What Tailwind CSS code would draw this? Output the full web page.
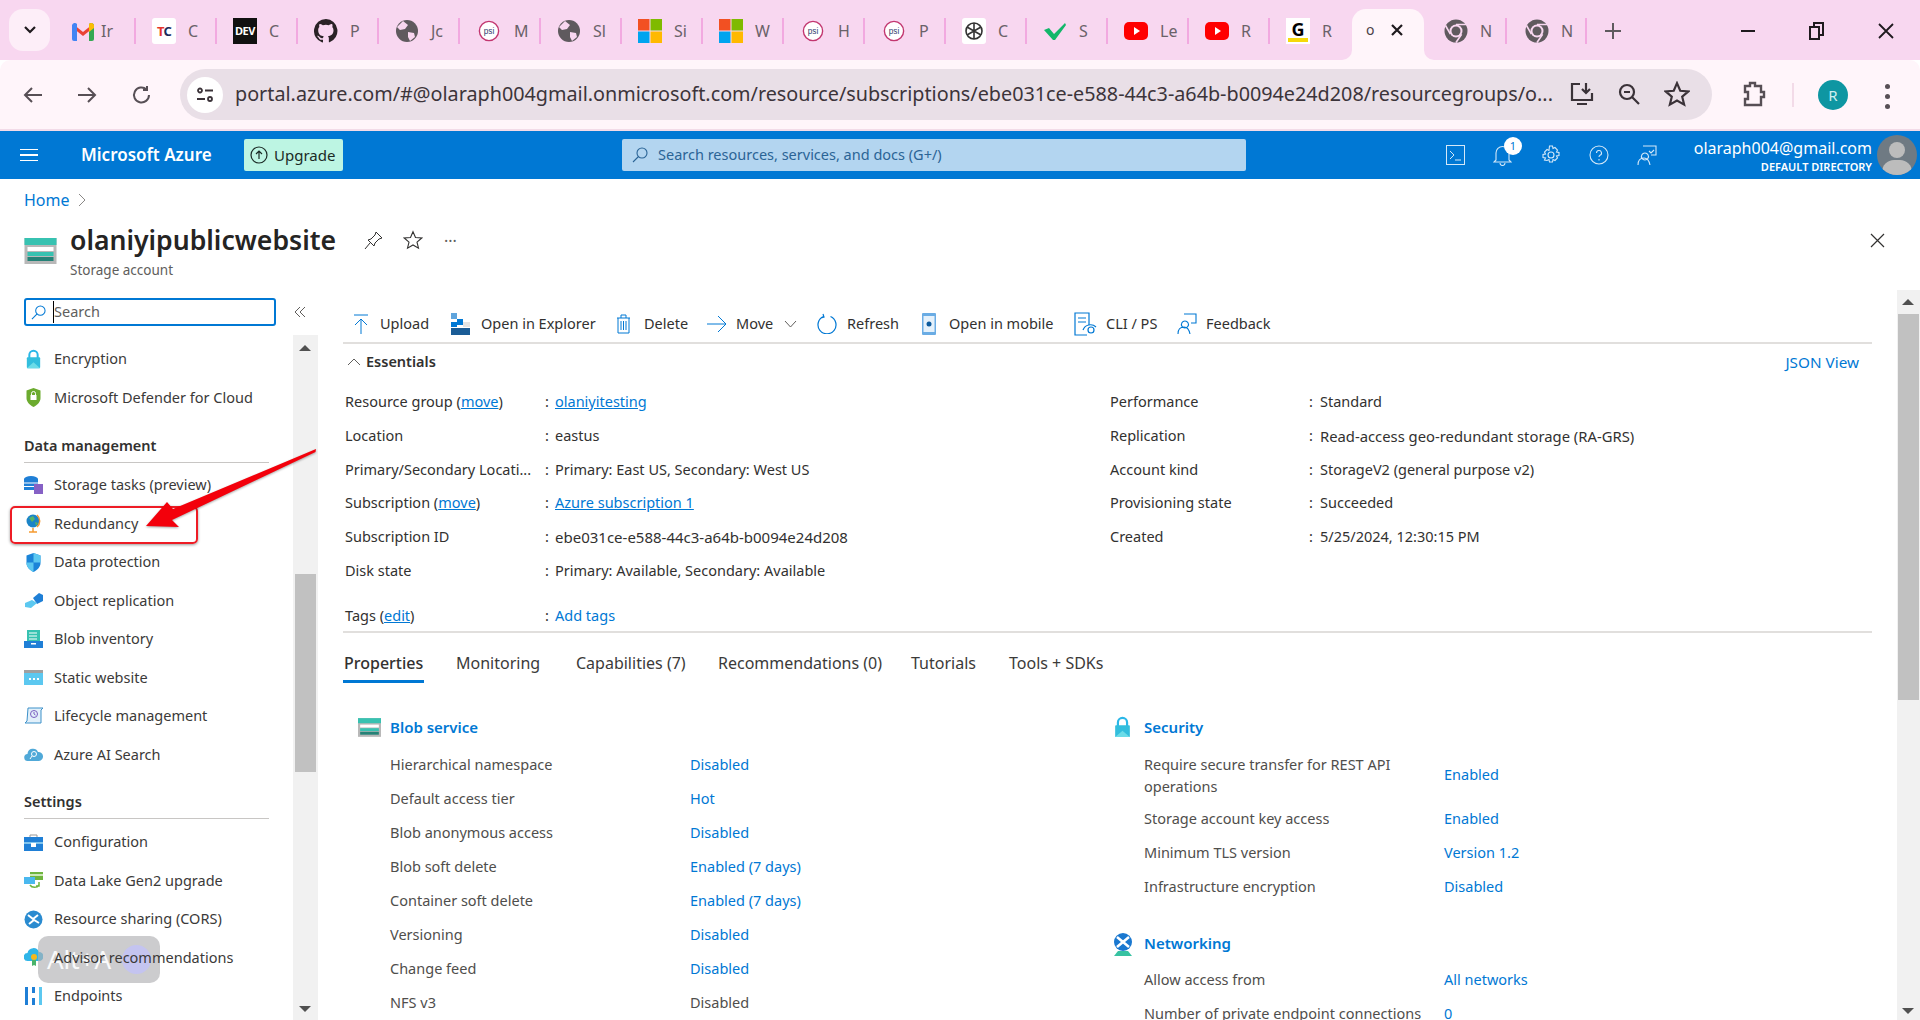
<!DOCTYPE html>
<html lang="en">
<head>
  <meta charset="UTF-8">
  <title>olaniyipublicwebsite - Microsoft Azure</title>
  <script src="https://cdn.jsdelivr.net/npm/@tailwindcss/browser@4"></script>
</head>
<body class="w-[1920px] h-[1020px] overflow-hidden bg-white relative font-['Noto_Sans',sans-serif] text-[#323130] text-[14.5px]">

  <svg class="hidden">
    <symbol id="storage" viewBox="0 0 32 26">
      <rect width="32" height="26" fill="#b8b8b8"/><rect width="32" height="7" fill="#37c2b1"/><rect x="3" y="9" width="26" height="4" fill="#fff"/><rect x="3" y="14" width="26" height="4" fill="#37c2b1"/><rect x="3" y="19" width="26" height="4" fill="#258277"/>
    </symbol>
    <symbol id="lock" viewBox="0 0 18 24">
      <path d="M4 11V7a5 5 0 0 1 10 0v4" fill="none" stroke="#2ab7e8" stroke-width="2.4"/><rect x="1" y="10" width="16" height="13" rx="1" fill="#32bedd"/><path d="M1 23l8-7 8 7z" fill="#6bdce8"/>
    </symbol>
    <symbol id="globe-net" viewBox="0 0 24 24">
      <circle cx="12" cy="10" r="9" fill="#1a78d0"/><path d="M6 5l6 5 6-5M6 15l6-5 6 5" stroke="#fff" stroke-width="2.5" fill="none"/><path d="M3 24l4-5h10l4 5z" fill="#37c2a1"/>
    </symbol>
    <symbol id="chrome" viewBox="0 0 24 24">
      <circle cx="12" cy="12" r="11.500" fill="#5f5a5e"/><circle cx="12" cy="12" r="6.500" fill="#f8d7f0"/><circle cx="12" cy="12" r="4.500" fill="#5f5a5e"/>
      <path d="M12 5.500h10.500M6.400 15.200L1.500 6.500M17.600 15.200L12 23.500" stroke="#f8d7f0" stroke-width="1.600"/>
    </symbol>
    <symbol id="world" viewBox="0 0 24 24">
      <circle cx="12" cy="12" r="11" fill="#5f5a5e"/><path d="M8 2l5 4-3 4-5 1-3-3zM13 13l6 1 1 4-5 4-2-4z" fill="#f8d7f0"/>
    </symbol>
    <symbol id="psi" viewBox="0 0 24 24">
      <circle cx="12" cy="12" r="10.5" fill="#fff" stroke="#c2366f" stroke-width="1.5"/><text x="12" y="15" text-anchor="middle" font-size="9" font-family="Liberation Sans" fill="#31406e">psi</text>
    </symbol>
    <symbol id="ms" viewBox="0 0 24 24">
      <rect width="11.5" height="11.5" fill="#f25022"/><rect x="12.5" width="11.5" height="11.5" fill="#7fba00"/><rect y="12.5" width="11.5" height="11.5" fill="#00a4ef"/><rect x="12.5" y="12.5" width="11.5" height="11.5" fill="#ffb900"/>
    </symbol>
    <symbol id="yt" viewBox="0 0 24 24">
      <rect y="3" width="24" height="18" rx="5" fill="#f00"/><path d="M10 8l6 4-6 4z" fill="#fff"/>
    </symbol>
  </svg>

  <!-- tab strip -->
  <div class="h-[60px] bg-[#f8d7f0] flex relative">
    <div class="ml-[9px] mt-[9px] w-[41px] h-[42px] rounded-[14px] bg-[#fdeef8] flex items-center justify-center">
      <svg width="14" height="10" viewBox="0 0 14 10" fill="none" stroke="#1f1a1e" stroke-width="2.2"><path d="M2 2l5 5 5-5"/></svg>
    </div>
    <div class="ml-[5px] mt-[18px] h-[26px] flex text-[#6a6268] text-[16px] leading-[26px]">
      <div class="w-[81px] h-[26px] border-r-2 border-[#f2a9e0] flex items-center pl-[16px] gap-[6px] overflow-hidden">
        <svg class="shrink-0" width="24" height="24" viewBox="0 0 24 24"><path d="M2 5l10 8 10-8v4l-10 8L2 9z" fill="#ea4335"/><path d="M1 6a3 3 0 0 1 5 -1v17H3a2 2 0 0 1-2-2z" fill="#4285f4"/><path d="M18 22V5a3 3 0 0 1 5 1v14a2 2 0 0 1-2 2z" fill="#34a853"/><path d="M18 5a3 3 0 0 1 5 1v3l-5 4z" fill="#fbbc04"/></svg><span>Ir</span>
      </div>
      <div class="w-[81px] h-[26px] border-r-2 border-[#f2a9e0] flex items-center pl-[16px] gap-[12px] overflow-hidden">
        <div class="shrink-0 w-[24px] h-[26px] bg-white rounded-[3px] flex items-center justify-center text-[13px] font-bold tracking-[-1px]"><span class="text-[#e5352b]">T</span><span class="text-[#1b2a5c]">C</span></div><span>C</span>
      </div>
      <div class="w-[81px] h-[26px] border-r-2 border-[#f2a9e0] flex items-center pl-[16px] gap-[12px] overflow-hidden">
        <div class="shrink-0 w-[24px] h-[26px] bg-[#111] text-white flex items-center justify-center text-[11px] font-bold tracking-[-0.5px]">DEV</div><span>C</span>
      </div>
      <div class="w-[81px] h-[26px] border-r-2 border-[#f2a9e0] flex items-center pl-[16px] gap-[12px] overflow-hidden">
        <svg class="shrink-0" width="24" height="24" viewBox="0 0 16 16" fill="#2a2226"><path d="M8 0a8 8 0 0 0-2.5 15.6c.4.1.5-.2.5-.4v-1.4c-2.2.5-2.7-1-2.7-1-.4-.9-.9-1.200-.9-1.200-.7-.5.1-.5.1-.5.8.1 1.200.8 1.200.8.7 1.200 1.900.9 2.300.7.1-.5.3-.9.5-1.100-1.800-.2-3.700-.9-3.700-4 0-.9.300-1.600.8-2.100-.1-.2-.4-1 .1-2.100 0 0 .7-.2 2.200.8a7.600 7.600 0 0 1 4 0c1.500-1 2.200-.8 2.200-.8.4 1.100.2 1.900.1 2.100.5.600.8 1.300.8 2.100 0 3.100-1.900 3.700-3.700 3.900.3.300.6.800.6 1.500v2.200c0 .2.100.5.500.4A8 8 0 0 0 8 0z"/></svg><span>P</span>
      </div>
      <div class="w-[81px] h-[26px] border-r-2 border-[#f2a9e0] flex items-center pl-[16px] gap-[12px] overflow-hidden">
        <svg class="shrink-0" width="24" height="24"><use href="#world"/></svg><span>Jc</span>
      </div>
      <div class="w-[81px] h-[26px] border-r-2 border-[#f2a9e0] flex items-center pl-[18px] gap-[14px] overflow-hidden">
        <svg class="shrink-0" width="22" height="22"><use href="#psi"/></svg><span>M</span>
      </div>
      <div class="w-[81px] h-[26px] border-r-2 border-[#f2a9e0] flex items-center pl-[16px] gap-[12px] overflow-hidden">
        <svg class="shrink-0" width="24" height="24"><use href="#world"/></svg><span>Sl</span>
      </div>
      <div class="w-[81px] h-[26px] border-r-2 border-[#f2a9e0] flex items-center pl-[16px] gap-[12px] overflow-hidden">
        <svg class="shrink-0" width="24" height="24"><use href="#ms"/></svg><span>Si</span>
      </div>
      <div class="w-[81px] h-[26px] border-r-2 border-[#f2a9e0] flex items-center pl-[16px] gap-[12px] overflow-hidden">
        <svg class="shrink-0" width="24" height="24"><use href="#ms"/></svg><span>W</span>
      </div>
      <div class="w-[81px] h-[26px] border-r-2 border-[#f2a9e0] flex items-center pl-[18px] gap-[14px] overflow-hidden">
        <svg class="shrink-0" width="22" height="22"><use href="#psi"/></svg><span>H</span>
      </div>
      <div class="w-[81px] h-[26px] border-r-2 border-[#f2a9e0] flex items-center pl-[18px] gap-[14px] overflow-hidden">
        <svg class="shrink-0" width="22" height="22"><use href="#psi"/></svg><span>P</span>
      </div>
      <div class="w-[81px] h-[26px] border-r-2 border-[#f2a9e0] flex items-center pl-[16px] gap-[12px] overflow-hidden">
        <div class="shrink-0 w-[24px] h-[26px] bg-white rounded-[3px] flex items-center justify-center"><svg width="20" height="20" viewBox="0 0 20 20" fill="none" stroke="#333" stroke-width="1.6"><circle cx="10" cy="10" r="8"/><path d="M10 2v16M3 6l14 8M17 6L3 14"/></svg></div><span>C</span>
      </div>
      <div class="w-[81px] h-[26px] border-r-2 border-[#f2a9e0] flex items-center pl-[16px] gap-[12px] overflow-hidden">
        <svg class="shrink-0" width="24" height="24" viewBox="0 0 24 24"><path d="M1 11l5-2 5 6L22 4l1 2-11 15h-2z" fill="#12b76a"/></svg><span>S</span>
      </div>
      <div class="w-[81px] h-[26px] border-r-2 border-[#f2a9e0] flex items-center pl-[16px] gap-[12px] overflow-hidden">
        <svg class="shrink-0" width="24" height="24"><use href="#yt"/></svg><span>Le</span>
      </div>
      <div class="w-[81px] h-[26px] border-r-2 border-[#f2a9e0] flex items-center pl-[16px] gap-[12px] overflow-hidden">
        <svg class="shrink-0" width="24" height="24"><use href="#yt"/></svg><span>R</span>
      </div>
      <div class="w-[80px] h-[26px] flex items-center pl-[16px] gap-[12px] overflow-hidden">
        <div class="shrink-0 w-[24px] h-[26px] bg-white flex flex-col items-center justify-center leading-none"><span class="text-[18px] font-bold text-black">G</span><span class="block w-[20px] h-[4px] bg-[#f5d90a]"></span></div><span>R</span>
      </div>
      <div class="w-[136px]"></div>
    </div>
    <!-- active tab -->
    <svg class="absolute left-[1342px] top-[50px]" width="92" height="10" viewBox="0 0 92 10" fill="#fff5fa"><path d="M10 0v10H0a10 10 0 0 0 10-10zM82 0v10h10A10 10 0 0 1 82 0z"/></svg>
    <div class="absolute left-[1352px] top-[9px] w-[72px] h-[51px] bg-[#fff5fa] rounded-t-[14px] flex items-center pl-[14px] pb-[10px] gap-[16px]">
      <span class="text-[14px] text-[#4a4248]">o</span>
      <svg width="14" height="14" viewBox="0 0 14 14" stroke="#1f1a1e" stroke-width="2.2"><path d="M2 2l10 10M12 2L2 12"/></svg>
    </div>
    <div class="absolute left-[1444px] top-[18px] h-[26px] flex text-[#6a6268] text-[16px]">
      <div class="w-[63px] h-[26px] border-r-2 border-[#f2a9e0] flex items-center gap-[12px] overflow-hidden">
        <svg class="shrink-0" width="24" height="24"><use href="#chrome"/></svg><span>N</span>
      </div>
      <div class="w-[80px] h-[26px] border-r-2 border-[#f2a9e0] flex items-center pl-[18px] gap-[12px] overflow-hidden">
        <svg class="shrink-0" width="24" height="24"><use href="#chrome"/></svg><span>N</span>
      </div>
      <div class="ml-[18px] flex items-center">
        <svg width="16" height="16" viewBox="0 0 16 16" stroke="#5f5a5e" stroke-width="2"><path d="M8 0v16M0 8h16"/></svg>
      </div>
    </div>
    <div class="absolute left-[1741px] top-[22px] flex items-center">
      <div class="w-[14px] h-[2px] bg-[#1f1a1e]"></div>
      <svg class="ml-[54px]" width="16" height="18" viewBox="0 0 16 18" fill="none" stroke="#1f1a1e" stroke-width="2"><rect x="1" y="5" width="9" height="12"/><path d="M5 5V1h9v12h-4"/></svg>
      <svg class="ml-[53px]" width="16" height="16" viewBox="0 0 16 16" stroke="#1f1a1e" stroke-width="1.800"><path d="M1 1l14 14M15 1L1 15"/></svg>
    </div>
  </div>

  <!-- browser toolbar -->
  <div class="h-[71px] bg-[#fff5fa] border-b-2 border-[#f3dbe8] rounded-t-[10px] flex items-start pt-[9px] relative">
    <div class="w-[180px] h-[51px] flex items-center text-[#574f55]">
      <svg class="ml-[23px]" width="20" height="20" viewBox="0 0 20 20" fill="none" stroke="currentColor" stroke-width="2"><path d="M19 10H2M9 3l-7 7 7 7"/></svg>
      <svg class="ml-[34px]" width="20" height="20" viewBox="0 0 20 20" fill="none" stroke="currentColor" stroke-width="2"><path d="M1 10h17M11 3l7 7-7 7"/></svg>
      <svg class="ml-[35px]" width="20" height="20" viewBox="0 0 20 20" fill="none" stroke="currentColor" stroke-width="2"><path d="M17 10a7.500 7.500 0 1 1-2.500-5.600M15 1v4h-4"/></svg>
    </div>
    <div class="w-[1532px] h-[51px] rounded-full bg-[#e9dfe7] flex items-center pl-[7px] relative">
      <div class="w-[36px] h-[36px] rounded-full bg-white flex items-center justify-center shrink-0">
        <svg width="18" height="18" viewBox="0 0 18 18" fill="none" stroke="#3a3238" stroke-width="1.800"><circle cx="4" cy="4.500" r="2"/><path d="M9 4.500h8M1 13h8"/><circle cx="14" cy="13" r="2"/></svg>
      </div>
      <span class="ml-[12px] pb-[2px] text-[19.780px] text-[#3c343a] whitespace-nowrap">portal.azure.com/#@olaraph004gmail.onmicrosoft.com/resource/subscriptions/ebe031ce-e588-44c3-a64b-b0094e24d208/resourcegroups/o...</span>
      <svg class="absolute left-[1389px] top-[12px]" width="26" height="26" viewBox="0 0 26 26" fill="none" stroke="#3a3238" stroke-width="2.200"><path d="M11 3H3v16h20V12M17 2v10M13 8l4 4 4-4M8 23h10"/></svg>
      <svg class="absolute left-[1437px] top-[13px]" width="24" height="24" viewBox="0 0 24 24" fill="none" stroke="#3a3238" stroke-width="2.200"><circle cx="10" cy="10" r="7"/><path d="M15 15l7 7M7 10h6"/></svg>
      <svg class="absolute left-[1484px] top-[12px]" width="26" height="26" viewBox="0 0 24 24" fill="none" stroke="#3a3238" stroke-width="2"><path d="M12 2l3 7 7.500.6-5.700 4.900 1.800 7.300L12 18l-6.600 3.800 1.800-7.300L1.500 9.600 9 9z"/></svg>
    </div>
    <svg class="absolute left-[1741px] top-[21px]" width="25" height="26" viewBox="0 0 25 26" fill="none" stroke="#574f55" stroke-width="2.400"><path d="M4 5h5V2h5v3h6v6h3v5h-3v8H4v-6h3v-7H4z"/></svg>
    <div class="absolute left-[1792px] top-[23px] w-[2px] h-[24px] bg-[#f3dbe8]"></div>
    <div class="absolute left-[1818px] top-[20px] w-[30px] h-[30px] rounded-full bg-[#0e96a2] text-[#cdeef0] text-[15px] flex items-center justify-center">R</div>
    <div class="absolute left-[1885px] top-[24px] flex flex-col gap-[5px]">
      <div class="w-[5px] h-[5px] rounded-full bg-[#574f55]"></div>
      <div class="w-[5px] h-[5px] rounded-full bg-[#574f55]"></div>
      <div class="w-[5px] h-[5px] rounded-full bg-[#574f55]"></div>
    </div>
  </div>

  <!-- azure header -->
  <header class="h-[48px] bg-[#0078d4] text-white flex items-center relative">
    <div class="ml-[20px] w-[18px] flex flex-col gap-[4px]">
      <div class="h-[1.5px] bg-white"></div><div class="h-[1.5px] bg-white"></div><div class="h-[1.5px] bg-white"></div>
    </div>
    <span class="ml-[43px] w-[131px] text-[17px] font-semibold whitespace-nowrap">Microsoft Azure</span>
    <div class="ml-[32px] w-[99px] h-[32px] bg-[#bdf5e3] text-[#1b2b26] flex items-center pl-[6px] gap-[6px] rounded-[2px]">
      <svg width="18" height="18" viewBox="0 0 18 18" fill="none" stroke="#1b2b26" stroke-width="1.200"><circle cx="9" cy="9" r="8"/><path d="M9 13V5M6 8l3-3 3 3"/></svg>
      <span class="text-[15px]">Upgrade</span>
    </div>
    <div class="ml-[279px] w-[624px] h-[32px] bg-[#b3d5f0] text-[#2b6496] flex items-center pl-[10px] gap-[10px] rounded-[2px]">
      <svg width="16" height="16" viewBox="0 0 16 16" fill="none" stroke="#2b6496" stroke-width="1.100"><circle cx="10" cy="6" r="5"/><path d="M6.500 9.500L1 15"/></svg>
      <span class="text-[14.5px]">Search resources, services, and docs (G+/)</span>
    </div>
    <svg class="absolute left-[1446px] top-[14px]" width="19" height="20" viewBox="0 0 19 20" fill="none" stroke="#d4e8f8" stroke-width="1"><rect x=".5" y=".5" width="18" height="19"/><path d="M4 6l4 4-4 4M9 15h6"/></svg>
    <svg class="absolute left-[1493px] top-[13px]" width="19" height="22" viewBox="0 0 19 22" fill="none" stroke="#d4e8f8" stroke-width="1.100"><path d="M3 16V9a6.500 6.500 0 0 1 13 0v7l2 2H1zM7 19a2.500 2.500 0 0 0 5 0"/></svg>
    <div class="absolute left-[1504px] top-[6px] w-[18px] h-[18px] rounded-full bg-white text-[#0078d4] text-[11px] flex items-center justify-center">1</div>
    <svg class="absolute left-[1541px] top-[14px]" width="20" height="20" viewBox="0 0 20 20" fill="none" stroke="#d4e8f8" stroke-width="1.100"><circle cx="10" cy="10" r="3"/><path d="M8.500 1h3l.5 2.500 2-1 2.500 2.500-1 2 2.500.5v3l-2.500.5 1 2-2.500 2.500-2-1-.5 2.500h-3l-.5-2.500-2 1L3.500 15l1-2L2 12.500v-3L4.500 9l-1-2L6 4.500l2 1z"/></svg>
    <svg class="absolute left-[1589px] top-[14px]" width="20" height="20" viewBox="0 0 20 20" fill="none" stroke="#d4e8f8" stroke-width="1.100"><circle cx="10" cy="10" r="9"/><path d="M7.500 8a2.500 2.500 0 1 1 3.500 2.300c-.7.4-1 .8-1 1.700M10 14v1.500"/></svg>
    <svg class="absolute left-[1637px] top-[14px]" width="20" height="21" viewBox="0 0 20 21" fill="none" stroke="#d4e8f8" stroke-width="1.100"><path d="M6 1h13v9h-5M8 8a3.500 3.500 0 1 1-.1 0zM1 20c0-5 3-7 6-7s5 2 6 7M12 6l2 2 3-3"/></svg>
    <div class="absolute right-[48px] top-[5px] text-right leading-none">
      <div class="text-[16px] leading-[24px] whitespace-nowrap">olaraph004@gmail.com</div>
      <div class="text-[11px] font-semibold leading-[14px] whitespace-nowrap">DEFAULT DIRECTORY</div>
    </div>
    <div class="absolute left-[1877px] top-[4px] w-[40px] h-[40px] rounded-full bg-[#6f7a83] overflow-hidden flex flex-col items-center">
      <div class="mt-[7px] w-[16px] h-[16px] rounded-full bg-[#bcbcbc] shrink-0"></div>
      <div class="mt-[2px] w-[30px] h-[24px] rounded-full bg-[#bcbcbc] shrink-0"></div>
    </div>
  </header>

  <!-- breadcrumb -->
  <div class="h-[42px] pl-[24px] flex items-center gap-[8px]">
    <span class="text-[16px] text-[#0078d4]">Home</span>
    <svg width="8" height="14" viewBox="0 0 8 14" fill="none" stroke="#8a8886"><path d="M1 1l6 6-6 6"/></svg>
  </div>

  <!-- title -->
  <div class="h-[69px] pl-[24px] flex items-start relative">
    <svg class="mt-[17px]" width="33" height="26"><use href="#storage"/></svg>
    <div class="ml-[13px]">
      <h1 class="text-[26.600px] leading-[38px] font-semibold text-[#252423] whitespace-nowrap">olaniyipublicwebsite</h1>
      <div class="mt-[3px] text-[13.500px] leading-[16px] text-[#605e5c]">Storage account</div>
    </div>
    <svg class="ml-[28px] mt-[9px]" width="20" height="20" viewBox="0 0 20 20" fill="none" stroke="#323130"><path d="M12 2l6 6-3 1-4 4-1 3-6-6 3-1 4-4zM6 13l-5 6"/></svg>
    <svg class="ml-[19px] mt-[9px]" width="20" height="20" viewBox="0 0 24 24" fill="none" stroke="#323130" stroke-width="1.300"><path d="M12 2l3 7 7.500.6-5.700 4.900 1.800 7.300L12 18l-6.600 3.800 1.800-7.300L1.500 9.600 9 9z"/></svg>
    <span class="ml-[21px] mt-[8px] text-[16px] text-[#605e5c]">···</span>
    <svg class="absolute left-[1870px] top-[12px]" width="15" height="15" viewBox="0 0 15 15" stroke="#323130" stroke-width="1.200"><path d="M1 1l13 13M14 1L1 14"/></svg>
  </div>

  <!-- blade body -->
  <div class="flex h-[730px]">

    <!-- resource menu -->
    <aside class="w-[343px] shrink-0 flex flex-col">
      <div class="h-[45px] pt-[8px] pl-[24px] flex items-start">
        <div class="w-[252px] h-[28px] border-2 border-[#0078d4] rounded-[3px] flex items-center pl-[5px] gap-[7px]">
          <svg width="15" height="15" viewBox="0 0 16 16" fill="none" stroke="#0078d4" stroke-width="1.100"><circle cx="10" cy="6" r="5"/><path d="M6.500 9.500L1 15"/></svg>
          <span class="text-[#605e5c] border-l border-black leading-[20px] pb-[2px]">Search</span>
        </div>
        <svg class="ml-[18px] mt-[8px]" width="12" height="12" viewBox="0 0 12 12" fill="none" stroke="#605e5c"><path d="M6 1L1 6l5 5M11 1L6 6l5 5"/></svg>
      </div>
      <div class="flex-1 flex min-h-0">
        <nav class="w-[293px] pl-[24px] pt-[5px] overflow-hidden text-[#3b3a39]">
          <div class="h-[38.500px] flex items-center gap-[11px]">
            <svg class="w-[15px] ml-[2px] mr-[2px] h-[20px]"><use href="#lock"/></svg>Encryption
          </div>
          <div class="h-[38.500px] flex items-center gap-[11px]">
            <svg class="ml-[2px] mr-[2px]" width="15" height="19" viewBox="0 0 15 19"><path d="M7.500 0l7 2.500V10c0 4-3 7-7 9-4-2-7-5-7-9V2.500z" fill="#6cab2f"/><rect x="4.500" y="7" width="6" height="5" fill="#fff"/><path d="M5.500 7V5.500a2 2 0 0 1 4 0V7" fill="none" stroke="#fff"/></svg>Microsoft Defender for Cloud
          </div>
          <div class="mt-[16px] h-[30px] w-[245px] border-b border-[#c8c6c4] font-semibold text-[#323130] leading-[24px]">Data management</div>
          <div class="mt-[3px] h-[38.500px] flex items-center gap-[11px]">
            <svg width="19" height="18" viewBox="0 0 19 18"><ellipse cx="7" cy="3" rx="7" ry="3" fill="#1f7fd6"/><rect y="3" width="14" height="11" fill="#1f7fd6"/><path d="M0 7h14M0 10.500h14" stroke="#fff"/><rect x="10" y="8" width="9" height="10" fill="#8661c5"/></svg>Storage tasks (preview)
          </div>
          <div class="h-[38.500px] flex items-center gap-[11px]">
            <svg class="ml-[2px] mr-[2px]" width="15" height="19" viewBox="0 0 15 19"><circle cx="7" cy="7" r="6.500" fill="#1b84c7"/><path d="M3 4l4-2 2 3-3 3zM9 8l3 1-2 3z" fill="#57b369"/><path d="M11 1a8 8 0 0 1 0 12" fill="none" stroke="#f59a30" stroke-width="1.500"/><path d="M3 18h8M7 14v4" stroke="#f59a30" stroke-width="1.500"/></svg>Redundancy
          </div>
          <div class="h-[38.500px] flex items-center gap-[11px]">
            <svg class="ml-[2px] mr-[2px]" width="15" height="19" viewBox="0 0 15 19"><path d="M7.500 0l7 2.500V10c0 4-3 7-7 9-4-2-7-5-7-9V2.500z" fill="#1b84d8"/><path d="M7.500 0l7 2.500V9.500h-7z" fill="#5cc8f0"/><path d="M.5 9.500h7V19c-4-2-7-5-7-9z" fill="#5cc8f0"/></svg>Data protection
          </div>
          <div class="h-[38.500px] flex items-center gap-[11px]">
            <svg width="19" height="18" viewBox="0 0 19 18"><path d="M9 6l6-5 4 2v6l-6 3z" fill="#1f7fd6"/><path d="M1 11l7-3 5 3-6 5-6-1z" fill="#5cc8f0"/></svg>Object replication
          </div>
          <div class="h-[38.500px] flex items-center gap-[11px]">
            <svg width="19" height="18" viewBox="0 0 19 18"><rect x="3" width="13" height="12" fill="#37c2b1"/><path d="M5 3h8M5 6h8M5 9h8" stroke="#fff"/><rect y="11" width="19" height="7" fill="#1f7fd6"/><rect x="7" y="13" width="5" height="1.500" fill="#fff"/></svg>Blob inventory
          </div>
          <div class="h-[38.500px] flex items-center gap-[11px]">
            <svg width="19" height="15" viewBox="0 0 19 15"><rect width="19" height="15" fill="#5cc8f0"/><rect width="19" height="3" fill="#a0a0a0"/><path d="M5 9h2M9 9h2M13 9h2" stroke="#fff" stroke-width="2"/></svg>Static website
          </div>
          <div class="h-[38.500px] flex items-center gap-[11px]">
            <svg width="19" height="18" viewBox="0 0 19 18"><path d="M4 1h15l-2 2v13H1l2-2z" fill="#e2f0fa" stroke="#3d91c9"/><circle cx="10" cy="7" r="3.500" fill="none" stroke="#7b5fc0"/><path d="M10 5v2l1.500 1" stroke="#7b5fc0" fill="none"/></svg>Lifecycle management
          </div>
          <div class="h-[38.500px] flex items-center gap-[11px]">
            <svg width="19" height="14" viewBox="0 0 19 14"><path d="M4 13a3.500 3.500 0 0 1-.5-7A5.500 5.500 0 0 1 14 4a4.500 4.500 0 0 1 1 9z" fill="#50a9d8"/><circle cx="10" cy="6" r="2.500" fill="none" stroke="#fff"/><path d="M8 8l-2 3" stroke="#fff"/></svg>Azure AI Search
          </div>
          <div class="mt-[15px] h-[30px] w-[245px] border-b border-[#c8c6c4] font-semibold text-[#323130] leading-[24px]">Settings</div>
          <div class="mt-[4px] h-[38.500px] flex items-center gap-[11px]">
            <svg width="19" height="17" viewBox="0 0 19 17"><path d="M6 3V1h7v2" fill="none" stroke="#999"/><rect y="3" width="19" height="14" fill="#1f7fd6"/><rect y="8" width="19" height="2" fill="#7fc4ee"/><rect x="7" y="9" width="5" height="4" fill="#fff"/></svg>Configuration
          </div>
          <div class="h-[38.500px] flex items-center gap-[11px]">
            <svg width="19" height="18" viewBox="0 0 19 18"><rect x="6" width="13" height="8" fill="#6fb53e"/><rect x="6" y="2" width="13" height="2" fill="#cde8b8"/><rect y="5" width="11" height="7" fill="#4ab8ef"/><path d="M6 13a5 4 0 0 0 9 0M15 10v4h-3" fill="none" stroke="#6fb53e" stroke-width="1.500"/></svg>Data Lake Gen2 upgrade
          </div>
          <div class="h-[38.500px] flex items-center gap-[11px]">
            <svg width="19" height="19" viewBox="0 0 19 19"><circle cx="9.500" cy="9.500" r="9" fill="#2a8bd0"/><path d="M4 5l5 4 5-4M5 14l5-4 5 3" stroke="#fff" stroke-width="2" fill="none"/></svg>Resource sharing (CORS)
          </div>
          <div class="h-[38.500px] flex items-center gap-[11px]">
            <svg width="19" height="19" viewBox="0 0 19 19"><path d="M4 13a4 4 0 0 1-.5-8A6 6 0 0 1 15 4a4.500 4.500 0 0 1 0 9z" fill="#2fb5e8"/><circle cx="10" cy="9" r="3" fill="#f5b81e"/><path d="M8 12v6l2-1 2 1v-6" fill="#4ab36a"/></svg><span class="relative z-20">Advisor recommendations</span>
          </div>
          <div class="h-[38.500px] flex items-center gap-[11px]">
            <svg width="19" height="18" viewBox="0 0 19 18"><rect x="1" width="3" height="18" fill="#1f7fd6"/><rect x="8" width="3" height="18" fill="#1f7fd6"/><rect x="15" width="3" height="18" fill="#5cc8f0"/><rect x="8" y="6" width="3" height="5" fill="#fff"/></svg>Endpoints
          </div>
        </nav>
        <div class="w-[25px] bg-[#f1f1f1] flex flex-col relative">
          <div class="absolute left-[6px] top-[10px] w-0 h-0 border-x-[6px] border-x-transparent border-b-[6px] border-b-[#505050]"></div>
          <div class="absolute left-[2px] top-[239px] w-[21px] h-[198px] bg-[#c1c1c1]"></div>
          <div class="absolute left-[6px] bottom-[8px] w-0 h-0 border-x-[6px] border-x-transparent border-t-[6px] border-t-[#505050]"></div>
        </div>
      </div>
    </aside>

    <!-- overview -->
    <main class="w-[1529px] shrink-0 overflow-hidden">
      <div class="h-[54px] pt-[15px] border-b-2 border-[#e1dfdd] flex items-center text-[#323130]">
        <div class="ml-[9px] w-[99px] flex items-center gap-[10px]">
          <svg width="18" height="20" viewBox="0 0 18 20" fill="none" stroke="#0078d4"><path d="M2 1h14M9 20V5M3 11l6-6 6 6"/></svg>Upload
        </div>
        <div class="w-[165px] flex items-center gap-[11px]">
          <svg width="19" height="22" viewBox="0 0 19 22"><rect width="6" height="6" fill="#60a5dd"/><rect x="6" y="6" width="6" height="6" fill="#0078d4"/><rect y="9" width="6" height="5" fill="#0078d4"/><rect x="12" y="9" width="7" height="5" fill="#e3e3e3"/><rect y="15" width="19" height="7" fill="#1a5c96"/></svg>Open in Explorer
        </div>
        <div class="w-[91px] flex items-center gap-[13px]">
          <svg width="15" height="20" viewBox="0 0 15 20" fill="none" stroke="#0078d4"><path d="M1 4h13M5 4V1h5v3M2 4v15h11V4M5 7v9M7.500 7v9M10 7v9"/></svg>Delete
        </div>
        <div class="w-[110px] flex items-center gap-[9px]">
          <svg width="20" height="18" viewBox="0 0 20 18" fill="none" stroke="#0078d4"><path d="M0 9h19M11 1l8 8-8 8"/></svg>Move
          <svg class="ml-[2px]" width="13" height="8" viewBox="0 0 13 8" fill="none" stroke="#605e5c"><path d="M1 1l5.500 6L12 1"/></svg>
        </div>
        <div class="w-[105px] flex items-center gap-[10px]">
          <svg width="20" height="21" viewBox="0 0 20 21" fill="none" stroke="#0078d4" stroke-width="1.200"><path d="M13.500 3.500a9 9 0 1 1-7 0M6 1l1 3-3 1"/></svg>Refresh
        </div>
        <div class="w-[152px] flex items-center gap-[13px]">
          <svg width="14" height="22" viewBox="0 0 14 22"><rect width="14" height="22" rx="1" fill="#6aace4"/><rect x="1.500" y="3" width="11" height="16" fill="#e5f1fb"/><circle cx="7" cy="11" r="2.500" fill="#0b5a9d"/></svg>Open in mobile
        </div>
        <div class="w-[103px] flex items-center gap-[9px]">
          <svg width="23" height="24" viewBox="0 0 23 24" fill="none" stroke="#0078d4" stroke-width="1.200"><path d="M13 23H1V1h14v12M4 6h8M4 10h8"/><circle cx="17" cy="18" r="3"/><path d="M9 18a8 8 0 0 1 13-3"/></svg>CLI / PS
        </div>
        <div class="flex items-center gap-[9px]">
          <svg width="20" height="22" viewBox="0 0 20 22" fill="none" stroke="#0078d4" stroke-width="1.100"><path d="M7 1h12v9h-5M8 8a3.500 3.500 0 1 1-.1 0zM1 21c0-5 3-7 6-7s5 2 6 7"/></svg>Feedback
        </div>
      </div>

      <div class="h-[36px] flex items-center relative">
        <svg class="ml-[4px]" width="14" height="8" viewBox="0 0 14 8" fill="none" stroke="#605e5c"><path d="M1 7l6-6 6 6"/></svg>
        <span class="ml-[5px] font-semibold">Essentials</span>
        <span class="absolute right-[13px] text-[15.300px] text-[#0078d4]">JSON View</span>
      </div>

      <!-- essentials -->
      <div class="flex pt-[5px] h-[253px] border-b-2 border-[#e1dfdd] text-[#323130]">
        <div class="w-[767px]">
          <div class="h-[33.800px] flex items-center pl-[2px]"><span class="w-[200px] whitespace-nowrap">Resource group (<span class="text-[#0078d4] underline">move</span>)</span><span class="w-[10px]">:</span><span class="text-[#0078d4] underline">olaniyitesting</span></div>
          <div class="h-[33.800px] flex items-center pl-[2px]"><span class="w-[200px]">Location</span><span class="w-[10px]">:</span><span>eastus</span></div>
          <div class="h-[33.800px] flex items-center pl-[2px]"><span class="w-[200px] whitespace-nowrap">Primary/Secondary Locati...</span><span class="w-[10px]">:</span><span>Primary: East US, Secondary: West US</span></div>
          <div class="h-[33.800px] flex items-center pl-[2px]"><span class="w-[200px] whitespace-nowrap">Subscription (<span class="text-[#0078d4] underline">move</span>)</span><span class="w-[10px]">:</span><span class="text-[#0078d4] underline">Azure subscription 1</span></div>
          <div class="h-[33.800px] flex items-center pl-[2px]"><span class="w-[200px]">Subscription ID</span><span class="w-[10px]">:</span><span class="text-[15px]">ebe031ce-e588-44c3-a64b-b0094e24d208</span></div>
          <div class="h-[33.800px] flex items-center pl-[2px]"><span class="w-[200px]">Disk state</span><span class="w-[10px]">:</span><span>Primary: Available, Secondary: Available</span></div>
          <div class="mt-[11px] h-[33.800px] flex items-center pl-[2px]"><span class="w-[200px]">Tags (<span class="text-[#0078d4] underline">edit</span>)</span><span class="w-[10px]">:</span><span class="text-[#0078d4]">Add tags</span></div>
        </div>
        <div>
          <div class="h-[33.800px] flex items-center"><span class="w-[199px]">Performance</span><span class="w-[11px]">:</span><span>Standard</span></div>
          <div class="h-[33.800px] flex items-center"><span class="w-[199px]">Replication</span><span class="w-[11px]">:</span><span class="text-[14.800px]">Read-access geo-redundant storage (RA-GRS)</span></div>
          <div class="h-[33.800px] flex items-center"><span class="w-[199px]">Account kind</span><span class="w-[11px]">:</span><span>StorageV2 (general purpose v2)</span></div>
          <div class="h-[33.800px] flex items-center"><span class="w-[199px]">Provisioning state</span><span class="w-[11px]">:</span><span>Succeeded</span></div>
          <div class="h-[33.800px] flex items-center"><span class="w-[199px]">Created</span><span class="w-[11px]">:</span><span>5/25/2024, 12:30:15 PM</span></div>
        </div>
      </div>

      <!-- tabs -->
      <div class="h-[50px] flex items-start text-[16px] text-[#3b3a39] leading-[24px] pt-[18px] whitespace-nowrap">
        <div class="w-[81px] h-[32px] pl-[1px] border-b-[3px] border-[#0078d4] font-medium text-[#323130]">Properties</div>
        <div class="ml-[32px] w-[120px]">Monitoring</div>
        <div class="w-[142px]">Capabilities (7)</div>
        <div class="w-[193px]">Recommendations (0)</div>
        <div class="w-[98px]">Tutorials</div>
        <div>Tools + SDKs</div>
      </div>

      <!-- properties -->
      <div class="flex pl-[15px] pt-[25px]">
        <div class="w-[756px]">
          <div class="h-[38px] flex items-center gap-[9px]">
            <svg width="23" height="19"><use href="#storage"/></svg>
            <span class="font-semibold text-[#0078d4] text-[15px]">Blob service</span>
          </div>
          <div class="pl-[32px] pt-[1.500px] text-[#4f4e4c]">
            <div class="h-[34px] flex items-center"><span class="w-[300px]">Hierarchical namespace</span><span class="text-[#0078d4]">Disabled</span></div>
            <div class="h-[34px] flex items-center"><span class="w-[300px]">Default access tier</span><span class="text-[#0078d4]">Hot</span></div>
            <div class="h-[34px] flex items-center"><span class="w-[300px]">Blob anonymous access</span><span class="text-[#0078d4]">Disabled</span></div>
            <div class="h-[34px] flex items-center"><span class="w-[300px]">Blob soft delete</span><span class="text-[#0078d4]">Enabled (7 days)</span></div>
            <div class="h-[34px] flex items-center"><span class="w-[300px]">Container soft delete</span><span class="text-[#0078d4]">Enabled (7 days)</span></div>
            <div class="h-[34px] flex items-center"><span class="w-[300px]">Versioning</span><span class="text-[#0078d4]">Disabled</span></div>
            <div class="h-[34px] flex items-center"><span class="w-[300px]">Change feed</span><span class="text-[#0078d4]">Disabled</span></div>
            <div class="h-[34px] flex items-center"><span class="w-[300px]">NFS v3</span><span>Disabled</span></div>
          </div>
        </div>
        <div class="w-[700px]">
          <div class="h-[38px] flex items-center gap-[13px]">
            <svg width="17" height="22"><use href="#lock"/></svg>
            <span class="font-semibold text-[#0078d4] text-[15px]">Security</span>
          </div>
          <div class="pl-[30px] pt-[1.500px] text-[#4f4e4c]">
            <div class="flex items-center h-[54px]"><span class="w-[300px] pr-[30px] leading-[22px]">Require secure transfer for REST API operations</span><span class="text-[#0078d4]">Enabled</span></div>
            <div class="h-[34px] flex items-center"><span class="w-[300px]">Storage account key access</span><span class="text-[#0078d4]">Enabled</span></div>
            <div class="h-[34px] flex items-center"><span class="w-[300px]">Minimum TLS version</span><span class="text-[#0078d4]">Version 1.2</span></div>
            <div class="h-[34px] flex items-center"><span class="w-[300px]">Infrastructure encryption</span><span class="text-[#0078d4]">Disabled</span></div>
          </div>
          <div class="mt-[21px] h-[38px] flex items-center gap-[9px] -ml-[3px]">
            <svg width="24" height="24"><use href="#globe-net"/></svg>
            <span class="font-semibold text-[#0078d4] text-[15px]">Networking</span>
          </div>
          <div class="pl-[30px] text-[#4f4e4c]">
            <div class="h-[34px] flex items-center"><span class="w-[300px]">Allow access from</span><span class="text-[#0078d4]">All networks</span></div>
            <div class="h-[34px] flex items-center"><span class="w-[300px] whitespace-nowrap">Number of private endpoint connections</span><span class="text-[#0078d4]">0</span></div>
          </div>
        </div>
      </div>
    </main>

    <!-- page scrollbar -->
    <div class="w-[23px] ml-[25px] bg-[#f1f1f1] relative shrink-0">
      <div class="absolute left-[5px] top-[9px] w-0 h-0 border-x-[6px] border-x-transparent border-b-[6px] border-b-[#505050]"></div>
      <div class="absolute left-[1px] top-[24px] w-[21px] h-[386px] bg-[#c1c1c1]"></div>
      <div class="absolute left-[5px] bottom-[6px] w-0 h-0 border-x-[6px] border-x-transparent border-t-[6px] border-t-[#505050]"></div>
    </div>
  </div>

  <!-- annotation over the menu -->
  <div class="absolute left-[10px] top-[506px] w-[188px] h-[38px] border-2 border-[#ee1c25] rounded-[5px] shadow-[0_1px_3px_rgba(0,0,0,0.4)]"></div>
  <svg class="absolute left-[140px] top-[445px] drop-shadow-[0_1px_1px_rgba(0,0,0,0.35)]" width="180" height="90" viewBox="0 0 180 90">
    <path d="M6 81L27 57l6 7L176 4l-.500 3L32 75l7 7z" fill="#f3000b"/>
  </svg>

  <!-- key press overlay -->
  <div class="absolute z-10 left-[38px] top-[936px] w-[122px] h-[47px] rounded-[10px] bg-[#b0b0b4]/65 text-white/90 text-[26px] flex items-center pl-[9px]">
    Alt+A
    <div class="absolute left-[84px] top-[9px] w-[29px] h-[29px] rounded-full bg-[#c0c0ff]/70"></div>
  </div>
</body>
</html>
